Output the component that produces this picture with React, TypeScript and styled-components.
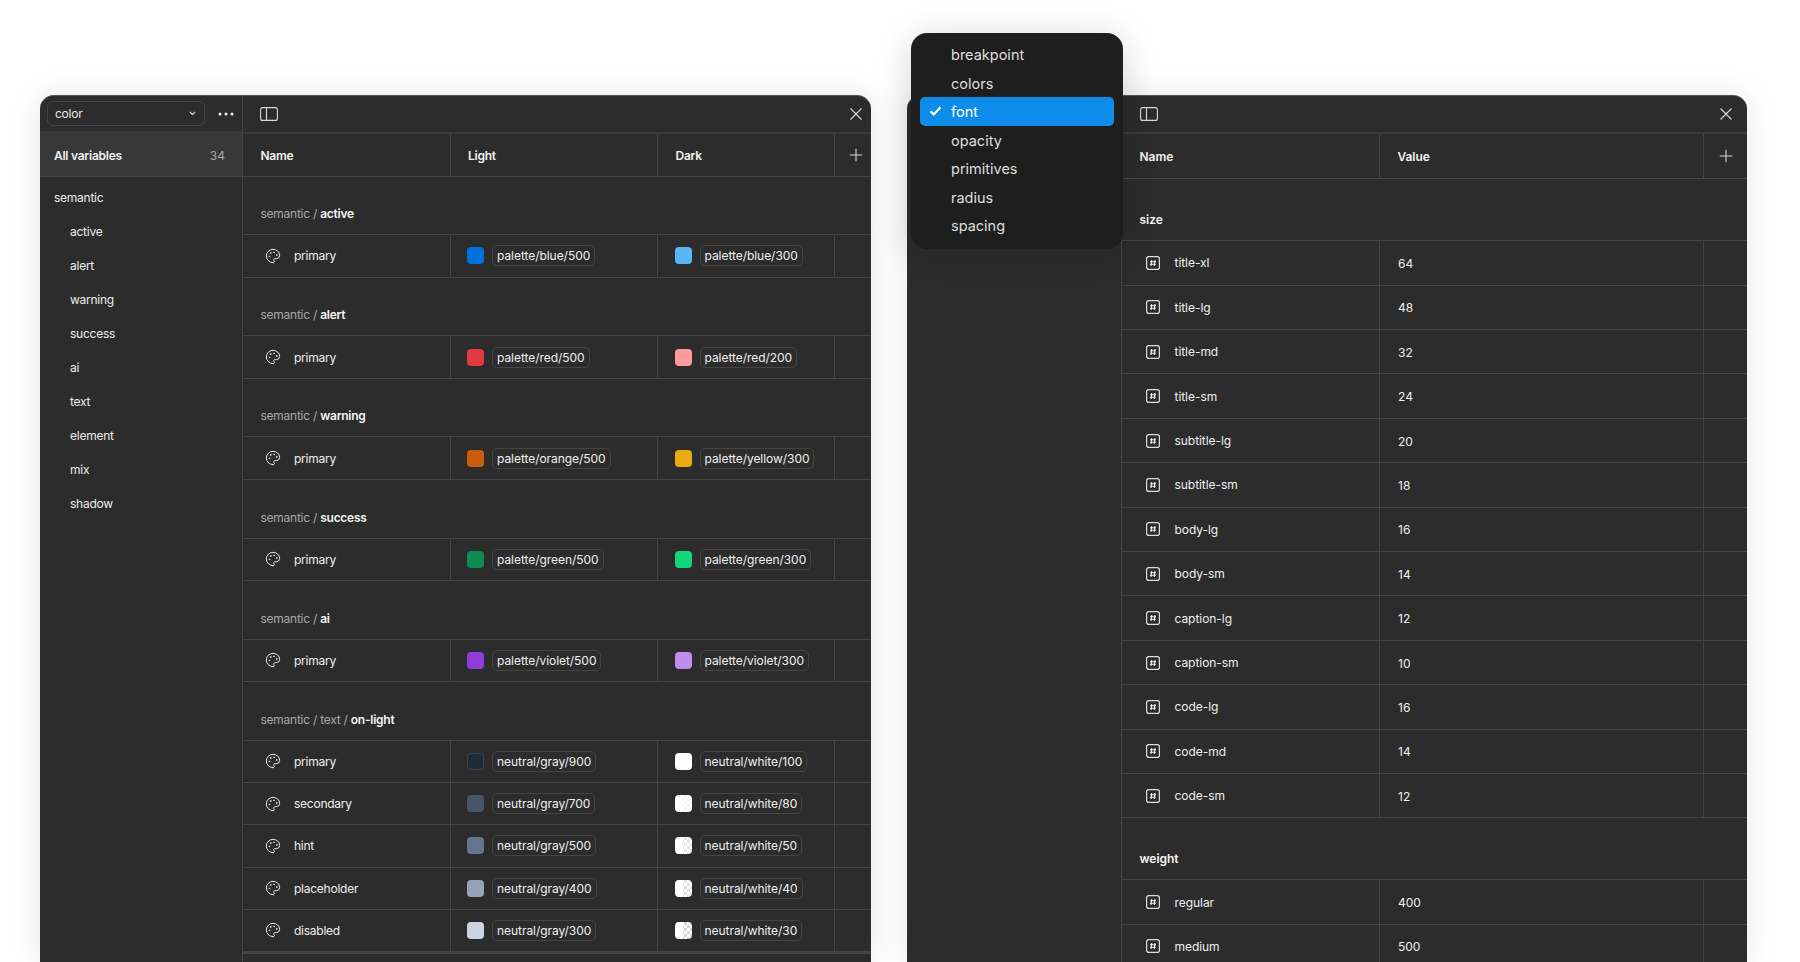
import React from "react";
import styled, { createGlobalStyle } from "styled-components";
import { Palette } from "lucide-react";

const Global = createGlobalStyle`
  html, body { margin: 0; padding: 0; background: #fff; }
  body { font-family: Inter, "Liberation Sans", sans-serif; -webkit-font-smoothing: antialiased; }
`;

const Page = styled.div`
  position: relative;
  width: 1800px;
  height: 962px;
  overflow: hidden;
  display: flex;
  align-items: flex-start;
  gap: 36px;
  padding: 95px 0 0 40px;
  box-sizing: border-box;
  background: #fff;
`;

const Win = styled.section<{ $w: number; $side: number; $ls: number }>`
  width: ${(p) => p.$w}px;
  height: 867px;
  flex: none;
  display: grid;
  grid-template-columns: ${(p) => p.$side}px 1fr;
  background: #2c2c2c;
  border-radius: 14px 14px 0 0;
  overflow: hidden;
  color: #f0f0f0;
  font-size: 12px;
  letter-spacing: ${(p) => p.$ls}px;
  box-shadow: 0 0 32px rgba(0, 0, 0, 0.1);
  border-top: 1px solid #555;
  box-sizing: border-box;
`;

const Side = styled.aside`
  border-right: 1px solid #444;
  display: flex;
  flex-direction: column;
  min-width: 0;
`;

const SideTop = styled.div`
  height: 37px;
  box-sizing: border-box;
  display: flex;
  align-items: center;
  padding: 0 8px 0 7px;
  justify-content: space-between;
  border-bottom: 2px solid #3a3a3a;
`;

const Select = styled.div`
  width: 158px;
  height: 25px;
  box-sizing: border-box;
  border: 1px solid #444;
  border-radius: 6px;
  display: flex;
  align-items: center;
  justify-content: space-between;
  padding: 0 8px 0 7px;
  color: #e8e8e8;
`;

const SideAll = styled.div`
  height: 43.5px;
  box-sizing: border-box;
  background: #383838;
  border-bottom: 1px solid #444;
  display: flex;
  align-items: center;
  justify-content: space-between;
  padding: 2px 17px 0 14px;
  font-weight: 600;
  & > span { color: #a8a8a8; font-weight: 400; letter-spacing: 0; }
`;

const SideList = styled.div`
  display: flex;
  flex-direction: column;
  padding-top: 4.5px;
`;

const SideItem = styled.div<{ $indent?: boolean }>`
  height: 34px;
  line-height: 34px;
  padding-left: ${(p) => (p.$indent ? 30 : 14)}px;
  color: #ececec;
`;

const Main = styled.div`
  display: flex;
  flex-direction: column;
  min-width: 0;
`;

const MainTop = styled.div<{ $tall?: boolean; $pr: number; $pl: number }>`
  height: ${(p) => (p.$tall ? 38.3 : 37.5)}px;
  box-sizing: border-box;
  display: flex;
  align-items: center;
  justify-content: space-between;
  padding: 0 ${(p) => p.$pr}px 0 ${(p) => p.$pl}px;
  border-bottom: 2px solid #3a3a3a;
`;

const Head = styled.div<{ $cols: string; $h: number }>`
  display: grid;
  grid-template-columns: ${(p) => p.$cols};
  height: ${(p) => p.$h}px;
  box-sizing: border-box;
  border-bottom: 1px solid #444;
`;

const HeadCell = styled.div`
  display: flex;
  align-items: center;
  padding-left: 17.5px;
  padding-top: 1px;
  font-weight: 600;
  border-right: 1px solid #444;
  color: #f2f2f2;
`;

const PlusCell = styled.div<{ $pr: number }>`
  display: flex;
  align-items: center;
  justify-content: flex-end;
  padding-right: ${(p) => p.$pr}px;
`;

const Group = styled.div<{ $h: number; $pb: number }>`
  height: ${(p) => p.$h}px;
  box-sizing: border-box;
  display: flex;
  align-items: flex-end;
  padding: 0 0 ${(p) => p.$pb}px 17.5px;
  border-bottom: 1px solid #444;
  color: #a8a8a8;
  line-height: 15px;
  & > b { color: #f4f4f4; font-weight: 600; white-space: pre; }
  & > span { white-space: pre; }
`;

const Row = styled.div<{ $cols: string; $h: number }>`
  display: grid;
  grid-template-columns: ${(p) => p.$cols};
  height: ${(p) => p.$h}px;
  box-sizing: border-box;
  border-bottom: 1px solid #444;
`;

const Cell = styled.div`
  display: flex;
  align-items: center;
  min-width: 0;
  padding-left: 16.5px;
  border-right: 1px solid #444;
  white-space: nowrap;
  color: #efefef;
`;

const ValueCell = styled(Cell)`
  padding-left: 18px;
  padding-top: 1px;
  letter-spacing: 0;
`;

const BlankCell = styled.div``;

const NameCell = styled(Cell)<{ $gap: number; $pad: number }>`
  padding-left: ${(p) => p.$pad}px;
  gap: ${(p) => p.$gap}px;
`;

const Swatch = styled.span<{ $c: string; $check?: string; $ring?: boolean }>`
  width: 17px;
  height: 17px;
  flex: none;
  border-radius: 4px;
  box-sizing: border-box;
  margin-right: 8px;
  background: ${(p) =>
    p.$check
      ? `linear-gradient(90deg, #fff 50%, transparent 50%), repeating-conic-gradient(${p.$check} 0 25%, #fff 0 50%) 0 0 / 6px 6px`
      : p.$c};
  border: ${(p) => (p.$ring ? "1px solid #3b4452" : "none")};
`;

const Chip = styled.span`
  height: 21px;
  box-sizing: border-box;
  display: inline-flex;
  align-items: center;
  padding: 0 4px;
  border: 1px solid #444;
  border-radius: 5px;
  color: #f0f0f0;
  letter-spacing: -0.05px;
`;

const EndRule = styled.div`
  border-top: 2px solid #444;
`;

const Menu = styled.div`
  position: absolute;
  left: 911px;
  top: 33px;
  width: 212px;
  height: 216px;
  box-sizing: border-box;
  background: #1e1e1e;
  border-radius: 16px;
  padding: 7.4px 9px;
  box-shadow: 0 4px 36px rgba(0, 0, 0, 0.16);
  color: #dedede;
  font-size: 14.5px;
`;

const MenuItem = styled.div<{ $on?: boolean }>`
  height: 28.55px;
  display: flex;
  align-items: center;
  padding-left: 31px;
  position: relative;
  border-radius: 5px;
  background: ${(p) => (p.$on ? "#0d8ce9" : "transparent")};
  color: ${(p) => (p.$on ? "#fff" : "inherit")};
  & > svg { position: absolute; left: 9px; top: 8px; }
`;

const Dots = () => (
  <svg width="16" height="4" viewBox="0 0 16 4" style={{ display: "block" }}>
    <circle cx="2" cy="2" r="1.5" fill="#f0f0f0" />
    <circle cx="8" cy="2" r="1.5" fill="#f0f0f0" />
    <circle cx="14" cy="2" r="1.5" fill="#f0f0f0" />
  </svg>
);
const Chevron = () => (
  <svg width="7" height="5" viewBox="0 0 7 5" fill="none">
    <path d="M1 1l2.5 2.5L6 1" stroke="#ddd" strokeWidth="1.1" />
  </svg>
);
const PanelIcon = () => (
  <svg width="18" height="14" viewBox="0 0 18 14" fill="none">
    <rect x=".6" y=".6" width="16.8" height="12.8" rx="2" stroke="#d8d8d8" strokeWidth="1.1" />
    <path d="M6.5 .6v12.8" stroke="#d8d8d8" strokeWidth="1.1" />
  </svg>
);
const XIcon = () => (
  <svg width="14" height="14" viewBox="0 0 14 14" fill="none">
    <path d="M1.5 1.5l11 11M12.5 1.5l-11 11" stroke="#d8d8d8" strokeWidth="1.1" />
  </svg>
);
const PlusIcon = () => (
  <svg width="14" height="14" viewBox="0 0 14 14" fill="none">
    <path d="M7 .8v12.4M.8 7h12.4" stroke="#d8d8d8" strokeWidth="1.1" />
  </svg>
);
const HashIcon = () => (
  <svg width="14" height="14" viewBox="0 0 14 14" fill="none" style={{ flex: "none" }}>
    <rect x=".6" y=".6" width="12.8" height="12.8" rx="2.2" stroke="#dcdcdc" strokeWidth="1.2" />
    <path d="M5.7 4L5.1 10M8.9 4L8.3 10M4 5.8h6M3.9 8.2h6" stroke="#f0f0f0" strokeWidth="1.1" />
  </svg>
);
const CheckIcon = () => (
  <svg width="13" height="12" viewBox="0 0 13 12" fill="none">
    <path d="M1.5 6.2l3.2 3.2L11.5 2.2" stroke="#fff" strokeWidth="2.2" />
  </svg>
);

type V = { c: string; t: string; check?: string; ring?: boolean };
type R = { n: string; l: V; d: V };
const p = (c: string, t: string, check?: string, ring?: boolean): V => ({ c, t, check, ring });

const sections: { path: string; bold: string; rows: R[] }[] = [
  { path: "semantic / ", bold: "active", rows: [{ n: "primary", l: p("#0070dd", "palette/blue/500"), d: p("#58b5f6", "palette/blue/300") }] },
  { path: "semantic / ", bold: "alert", rows: [{ n: "primary", l: p("#e03a3e", "palette/red/500"), d: p("#ff999c", "palette/red/200") }] },
  { path: "semantic / ", bold: "warning", rows: [{ n: "primary", l: p("#cc5c0c", "palette/orange/500"), d: p("#e8ab12", "palette/yellow/300") }] },
  { path: "semantic / ", bold: "success", rows: [{ n: "primary", l: p("#0e8a52", "palette/green/500"), d: p("#10d878", "palette/green/300") }] },
  { path: "semantic / ", bold: "ai", rows: [{ n: "primary", l: p("#8f3fd9", "palette/violet/500"), d: p("#c08cf0", "palette/violet/300") }] },
  {
    path: "semantic / text / ",
    bold: "on-light",
    rows: [
      { n: "primary", l: p("#1f2937", "neutral/gray/900", undefined, true), d: p("#ffffff", "neutral/white/100") },
      { n: "secondary", l: p("#475569", "neutral/gray/700"), d: p("#fff", "neutral/white/80", "#f4f4f4") },
      { n: "hint", l: p("#64748b", "neutral/gray/500"), d: p("#fff", "neutral/white/50", "#e8e8e8") },
      { n: "placeholder", l: p("#94a3b8", "neutral/gray/400"), d: p("#fff", "neutral/white/40", "#e0e0e0") },
      { n: "disabled", l: p("#cbd5e1", "neutral/gray/300"), d: p("#fff", "neutral/white/30", "#d8d8d8") },
    ],
  },
];

const sideItems = ["active", "alert", "warning", "success", "ai", "text", "element", "mix", "shadow"];
const menuItems = ["breakpoint", "colors", "font", "opacity", "primitives", "radius", "spacing"];
const sizes: [string, number][] = [
  ["title-xl", 64], ["title-lg", 48], ["title-md", 32], ["title-sm", 24], ["subtitle-lg", 20], ["subtitle-sm", 18],
  ["body-lg", 16], ["body-sm", 14], ["caption-lg", 12], ["caption-sm", 10], ["code-lg", 16], ["code-md", 14], ["code-sm", 12],
];
const weights: [string, number][] = [["regular", 400], ["medium", 500]];

const LC = "207.5px 207.5px 177px 1fr";
const RC = "258px 324px 1fr";

const FontRows = ({ rows }: { rows: [string, number][] }) => (
  <>
    {rows.map(([n, v]) => (
      <Row key={n} $cols={RC} $h={44.4}>
        <NameCell $gap={15} $pad={23.5}>
          <HashIcon />
          {n}
        </NameCell>
        <ValueCell>{v}</ValueCell>
        <BlankCell />
      </Row>
    ))}
  </>
);

export default function App() {
  return (
    <Page>
      <Global />
      <Win $w={831} $side={203} $ls={-0.25}>
        <Side>
          <SideTop>
            <Select>
              color
              <Chevron />
            </Select>
            <Dots />
          </SideTop>
          <SideAll>
            All variables <span>34</span>
          </SideAll>
          <SideList>
            <SideItem>semantic</SideItem>
            {sideItems.map((s) => (
              <SideItem key={s} $indent>
                {s}
              </SideItem>
            ))}
          </SideList>
        </Side>
        <Main>
          <MainTop $pr={8} $pl={17}>
            <PanelIcon />
            <XIcon />
          </MainTop>
          <Head $cols={LC} $h={43}>
            <HeadCell>Name</HeadCell>
            <HeadCell>Light</HeadCell>
            <HeadCell>Dark</HeadCell>
            <PlusCell $pr={8}>
              <PlusIcon />
            </PlusCell>
          </Head>
          {sections.map((s) => (
            <React.Fragment key={s.bold}>
              <Group $h={58.8} $pb={13}>
                <span>{s.path}</span>
                <b>{s.bold}</b>
              </Group>
              {s.rows.map((r) => (
                <Row key={r.n} $cols={LC} $h={s.rows.length > 1 ? 42.25 : 42.3}>
                  <NameCell $gap={13} $pad={22}>
                    <Palette size={16} strokeWidth={1.5} color="#e8e8e8" style={{ flex: "none" }} />
                    {r.n}
                  </NameCell>
                  {[r.l, r.d].map((v) => (
                    <Cell key={v.t}>
                      <Swatch $c={v.c} $check={v.check} $ring={v.ring} />
                      <Chip>{v.t}</Chip>
                    </Cell>
                  ))}
                  <BlankCell />
                </Row>
              ))}
            </React.Fragment>
          ))}
          <EndRule />
        </Main>
      </Win>
      <Win $w={840} $side={215} $ls={-0.05}>
        <Side />
        <Main>
          <MainTop $tall $pr={14} $pl={18}>
            <PanelIcon />
            <XIcon />
          </MainTop>
          <Head $cols={RC} $h={45}>
            <HeadCell>Name</HeadCell>
            <HeadCell>Value</HeadCell>
            <PlusCell $pr={14}>
              <PlusIcon />
            </PlusCell>
          </Head>
          <Group $h={62} $pb={13}>
            <b>size</b>
          </Group>
          <FontRows rows={sizes} />
          <Group $h={62} $pb={13}>
            <b>weight</b>
          </Group>
          <FontRows rows={weights} />
        </Main>
      </Win>
      <Menu>
        {menuItems.map((m) => (
          <MenuItem key={m} $on={m === "font"}>
            {m === "font" && <CheckIcon />}
            {m}
          </MenuItem>
        ))}
      </Menu>
    </Page>
  );
}
